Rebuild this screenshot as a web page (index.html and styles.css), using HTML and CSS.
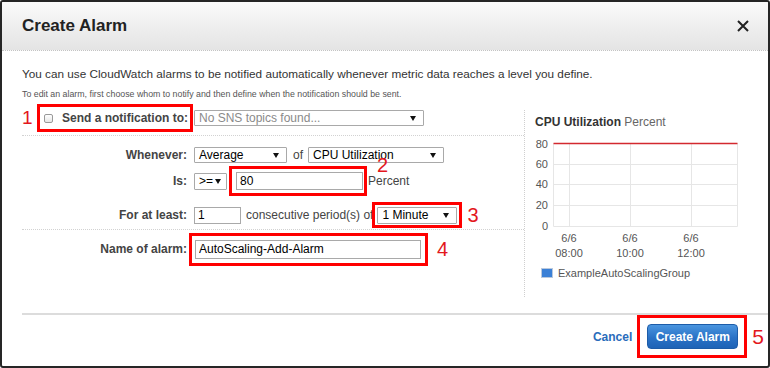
FILE: index.html
```html
<!DOCTYPE html>
<html lang="en">
<head>
  <meta charset="UTF-8">
  <meta name="viewport" content="width=device-width, initial-scale=1.0">
  <title>Create Alarm</title>
  <link rel="stylesheet" href="styles.css">
</head>
<body>
  <div class="dialog">
    <div class="header">
      <h1 class="title">Create Alarm</h1>
      <svg class="close" width="12" height="12" viewBox="0 0 12 12">
        <path d="M1 1 L11 11 M11 1 L1 11" stroke="#222" stroke-width="2" />
      </svg>
    </div>

    <div class="content">
      <p class="intro">You can use CloudWatch alarms to be notified automatically whenever metric data reaches a level you define.</p>
      <p class="note">To edit an alarm, first choose whom to notify and then define when the notification should be sent.</p>

      <div class="form-area">
        <div class="left">
          <div class="notify-row">
            <span class="mark mark-1">1</span>
            <label class="hl hl-notify">
              <span class="checkbox"></span>
              <span class="label-text">Send a notification to:</span>
            </label>
            <div class="select select-sns muted">No SNS topics found...<span class="arrow"></span></div>
          </div>

          <div class="cond">
            <div class="row row-whenever">
              <span class="label">Whenever:</span>
              <div class="select select-stat">Average<span class="arrow"></span></div>
              <span class="text of">of</span>
              <div class="select select-metric">CPU Utilization<span class="arrow"></span></div>
            </div>
            <div class="row row-is">
              <span class="label">Is:</span>
              <div class="select select-op">&gt;=<span class="arrow"></span></div>
              <div class="hl hl-threshold">
                <input class="field field-threshold" type="text" value="80">
              </div>
              <span class="unit">
                <span class="mark mark-2">2</span>
                Percent
              </span>
            </div>
            <div class="row row-period">
              <span class="label">For at least:</span>
              <input class="field field-periods" type="text" value="1">
              <span class="text periods-text">consecutive period(s) of</span>
              <div class="hl hl-period">
                <div class="select select-period">1 Minute<span class="arrow"></span></div>
              </div>
              <span class="mark mark-3">3</span>
            </div>
          </div>

          <div class="row row-name">
            <span class="label">Name of alarm:</span>
            <div class="hl hl-name">
              <input class="field field-name" type="text" value="AutoScaling-Add-Alarm">
            </div>
            <span class="mark mark-4">4</span>
          </div>
        </div>

        <div class="right">
          <div class="chart-title"><b>CPU Utilization</b> Percent</div>
          <svg class="chart" width="220" height="128" viewBox="0 0 220 128">
            <g stroke="#e6e6e6" stroke-width="1">
              <line x1="23.5" y1="31.5" x2="207.5" y2="31.5" />
              <line x1="23.5" y1="51.5" x2="207.5" y2="51.5" />
              <line x1="23.5" y1="72.5" x2="207.5" y2="72.5" />
              <line x1="23.5" y1="93.5" x2="207.5" y2="93.5" />
              <line x1="23.5" y1="10.5" x2="23.5" y2="93.5" />
              <line x1="39.5" y1="10.5" x2="39.5" y2="93.5" />
              <line x1="100.5" y1="10.5" x2="100.5" y2="93.5" />
              <line x1="161.5" y1="10.5" x2="161.5" y2="93.5" />
              <line x1="207.5" y1="10.5" x2="207.5" y2="93.5" />
            </g>
            <line x1="23.5" y1="10.5" x2="207.5" y2="10.5" stroke="#d3292f" stroke-width="1.5" />
            <g class="axis" text-anchor="end">
              <text x="18" y="14.5">80</text>
              <text x="18" y="35">60</text>
              <text x="18" y="55">40</text>
              <text x="18" y="76">20</text>
              <text x="18" y="97">0</text>
            </g>
            <g class="axis" text-anchor="middle">
              <text x="39" y="109">6/6</text>
              <text x="39" y="124">08:00</text>
              <text x="100" y="109">6/6</text>
              <text x="100" y="124">10:00</text>
              <text x="161" y="109">6/6</text>
              <text x="161" y="124">12:00</text>
            </g>
          </svg>
          <div class="legend">
            <span class="swatch"></span>
            ExampleAutoScalingGroup
          </div>
        </div>
      </div>

      <div class="footer">
        <a class="cancel" href="#">Cancel</a>
        <div class="hl hl-submit">
          <button class="btn-primary">Create Alarm</button>
        </div>
        <span class="mark mark-5">5</span>
      </div>
    </div>
  </div>
</body>
</html>
```

FILE: styles.css
```css
body {
  margin: 0;
  font-family: "Liberation Sans", Arial, sans-serif;
  font-size: 12px;
  color: #444;
  background: #fff;
}
.dialog {
  width: 770px;
  height: 368px;
  box-sizing: border-box;
  border: 2px solid #262626;
  border-radius: 3px;
  overflow: hidden;
  background: #fff;
}
.header {
  height: 48px;
  display: flex;
  align-items: center;
  justify-content: space-between;
  padding: 0 19px 0 20px;
  background: linear-gradient(#fbfbfb, #f1f1f1 40%, #e4e4e4);
  border-bottom: 1px dotted #c4c4c4;
}
.title {
  margin: 0;
  font-size: 17px;
  font-weight: bold;
  color: #222;
}
.content {
  padding-left: 20px;
}
.intro {
  margin: 15px 0 0;
  line-height: 16px;
  font-size: 11.75px;
  color: #333;
}
.note {
  margin: 6px 0 0;
  line-height: 12px;
  font-size: 8.8px;
  color: #555;
}
.form-area {
  display: flex;
  margin-top: 4px;
}
.left {
  width: 502px;
}
.right {
  margin-top: 6px;
  height: 187px;
  flex: 1;
  border-left: 1px dotted #cfcfcf;
  padding-left: 10px;
}

/* highlight boxes and numbers */
.hl {
  box-sizing: border-box;
  border: 3px solid #f00;
  display: flex;
  align-items: center;
}
.mark {
  font-size: 20px;
  line-height: 20px;
  color: #e3171d;
}

/* notification row */
.notify-row {
  display: flex;
  align-items: center;
  padding-bottom: 3px;
  border-bottom: 1px dotted #d2d2d2;
}
.mark-1 {
  width: 15px;
  font-size: 19px;
}
.hl-notify {
  width: 156px;
  height: 28px;
  padding-left: 4px;
}
.checkbox {
  width: 9px;
  height: 9px;
  box-sizing: border-box;
  border: 1px solid #999;
  border-radius: 2px;
  background: linear-gradient(#fff, #e6e6e6);
  margin-right: 9px;
}
.label-text {
  font-weight: bold;
  color: #444;
}

/* selects */
.select {
  box-sizing: border-box;
  height: 16px;
  display: flex;
  align-items: center;
  justify-content: space-between;
  padding: 0 7px 0 4px;
  border: 1px solid #a9a9a9;
  border-radius: 1px;
  background: #fff;
  color: #000;
  font-size: 12px;
}
.select.muted {
  color: #8a8a8a;
}
.arrow {
  width: 0;
  height: 0;
  border-left: 3px solid transparent;
  border-right: 3px solid transparent;
  border-top: 5px solid #111;
}
.select-sns {
  width: 230px;
  margin-left: 1px;
}
.select-stat {
  width: 93px;
}
.select-metric {
  width: 136px;
}
.select-op {
  width: 33px;
  height: 17px;
  padding-right: 5px;
}
.select-period {
  width: 80px;
  height: 17px;
  margin-left: 2px;
}

/* condition rows */
.cond {
  padding: 7px 0 2px;
  border-bottom: 1px dotted #d2d2d2;
}
.row {
  display: flex;
  align-items: center;
  height: 24px;
}
.row-is {
  height: 28px;
}
.row-period {
  margin-top: 8px;
}
.row-name {
  height: 38px;
}
.label {
  width: 165px;
  margin-right: 7px;
  text-align: right;
  font-weight: bold;
  color: #444;
}
.row-name .label {
  margin-right: 2px;
}
.text {
  color: #444;
}
.of {
  margin: 0 5px 0 6px;
}
.field {
  box-sizing: border-box;
  height: 18px;
  border: 1px solid #a9a9a9;
  padding: 0 3px;
  font-family: "Liberation Sans", Arial, sans-serif;
  font-size: 12px;
  color: #000;
  outline: none;
}
.hl-threshold {
  width: 138px;
  height: 30px;
  margin-left: 2px;
  padding: 0 1px 0 4px;
}
.field-threshold {
  width: 127px;
}
.unit {
  position: relative;
  margin-left: 1px;
}
.mark-2 {
  position: absolute;
  left: 9px;
  top: -19px;
}
.field-periods {
  width: 47px;
  height: 17px;
}
.periods-text {
  margin-left: 5px;
}
.hl-period {
  width: 90px;
  height: 26px;
  margin-left: -1px;
}
.mark-3 {
  margin-left: 5px;
}
.hl-name {
  width: 239px;
  height: 33px;
  padding: 0 4px 0 3px;
}
.field-name {
  width: 226px;
  height: 19px;
}
.mark-4 {
  margin-left: 9px;
}

/* chart */
.chart-title {
  padding-top: 5px;
  line-height: 14px;
  color: #666;
}
.chart-title b {
  color: #333;
}
.chart {
  display: block;
  margin: 4px 0 0 -5px;
}
.axis {
  font-family: "Liberation Sans", Arial, sans-serif;
  font-size: 11px;
  fill: #555;
}
.legend {
  display: flex;
  align-items: center;
  margin: 6px 0 0 6px;
  font-size: 11px;
  color: #555;
}
.swatch {
  width: 12px;
  height: 10px;
  box-sizing: border-box;
  border: 1px solid #b9c9de;
  background: #3b80d6;
  margin-right: 5px;
}

/* footer */
.footer {
  margin-top: 16px;
  border-top: 2px solid #dcdcdc;
  display: flex;
  justify-content: flex-end;
  align-items: center;
  padding-right: 4px;
}
.cancel {
  font-weight: bold;
  color: #2a6cbb;
  text-decoration: none;
  margin-right: 5px;
}
.hl-submit {
  width: 110px;
  height: 43px;
  padding: 0 6px 0 7px;
}
.btn-primary {
  width: 91px;
  height: 25px;
  border: 1px solid #1d5ca8;
  border-radius: 4px;
  background: linear-gradient(#4a95df, #2a72c6 55%, #1e63b6);
  color: #fff;
  font-family: "Liberation Sans", Arial, sans-serif;
  font-size: 12px;
  font-weight: bold;
  cursor: pointer;
}
.mark-5 {
  margin-left: 5px;
  font-size: 21px;
}
```
